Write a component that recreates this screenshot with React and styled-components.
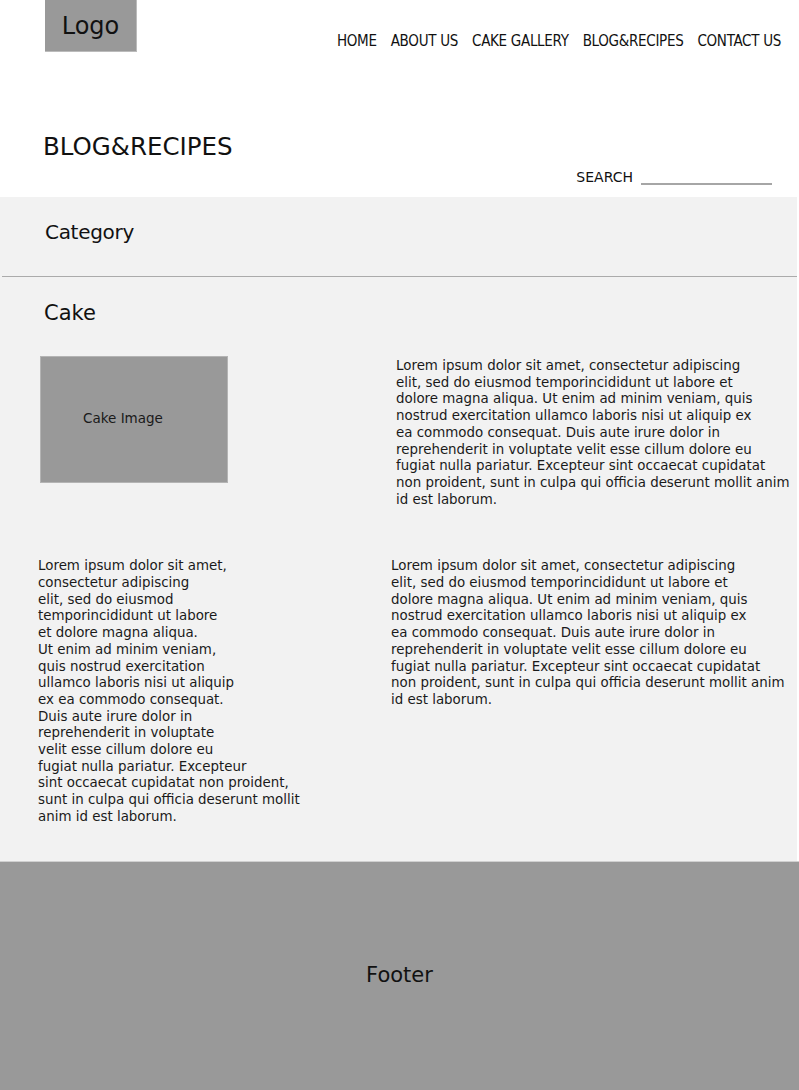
import React from "react";
import styled, { createGlobalStyle } from "styled-components";

const Global = createGlobalStyle`
  html, body { margin: 0; padding: 0; background: #fff; }
  body { font-family: "DejaVu Sans", Verdana, sans-serif; color: #111; }
  * { box-sizing: border-box; }
`;

const Page = styled.div`
  width: 799px;
  display: flex;
  flex-direction: column;
`;

const Header = styled.header`
  display: flex;
  justify-content: space-between;
  align-items: flex-start;
  padding: 0 18px 0 45px;
  height: 110px;
`;

const Logo = styled.div`
  width: 92px;
  height: 52px;
  background: #999;
  border-right: 1px solid #bbb;
  border-bottom: 1px solid #bbb;
  display: flex;
  align-items: center;
  justify-content: center;
  font-size: 24px;
`;

const Nav = styled.nav`
  display: flex;
  gap: 14px;
  margin-top: 32px;
  font-family: "DejaVu Sans Condensed", "DejaVu Sans", sans-serif;
  font-size: 15px;
  letter-spacing: -0.3px;
`;

const NavItem = styled.span`
  white-space: nowrap;
`;

const TitleRow = styled.div`
  display: flex;
  justify-content: space-between;
  align-items: flex-end;
  padding: 0 27px 12px 43px;
  height: 87px;
`;

const PageTitle = styled.h1`
  margin: 0;
  font-weight: normal;
  font-size: 24.5px;
  align-self: flex-start;
  margin-top: 22px;
`;

const Search = styled.div`
  display: flex;
  align-items: flex-end;
  gap: 8px;
  font-size: 14px;
`;

const SearchLine = styled.div`
  width: 131px;
  height: 2px;
  background: #a6a6a6;
`;

const Content = styled.main`
  width: 797px;
  background: #f2f2f2;
  height: 664px;
  display: flex;
  flex-direction: column;
`;

const Category = styled.h2`
  margin: 0;
  font-weight: normal;
  font-size: 20px;
  letter-spacing: -0.3px;
  padding: 23px 0 0 45px;
  height: 79px;
`;

const Divider = styled.hr`
  margin: 0 0 0 2px;
  border: none;
  height: 1px;
  background: #ababab;
`;

const SubHeading = styled.h3`
  margin: 0;
  font-weight: normal;
  font-size: 21px;
  padding: 24px 0 0 44px;
  height: 79px;
`;

const Row = styled.div`
  display: grid;
  grid-template-columns: ${(p) => p.$left}px 1fr;
  align-items: start;
  padding-left: ${(p) => p.$pad}px;
  margin-top: ${(p) => p.$top || 0}px;
`;

const ImageBox = styled.div`
  width: 188px;
  height: 127px;
  background: #999;
  border: 1px solid #b4b4b4;
  display: flex;
  align-items: center;
  padding-left: 42px;
  padding-bottom: 3px;
  font-size: 13.5px;
  color: #1a1a1a;
`;

const Para = styled.p`
  margin: 0;
  margin-top: ${(p) => p.$offset || 0}px;
  font-size: 13.4px;
  line-height: 16.7px;
  white-space: pre-line;
  color: #1a1a1a;
`;

const Footer = styled.footer`
  height: 229px;
  background: #999;
  border-top: 1px solid #d0d0d0;
  display: flex;
  align-items: center;
  justify-content: center;
  font-size: 21px;
  padding-bottom: 3px;
`;

const lorem = `Lorem ipsum dolor sit amet, consectetur adipiscing
elit, sed do eiusmod temporincididunt ut labore et
dolore magna aliqua. Ut enim ad minim veniam, quis
nostrud exercitation ullamco laboris nisi ut aliquip ex
ea commodo consequat. Duis aute irure dolor in
reprehenderit in voluptate velit esse cillum dolore eu
fugiat nulla pariatur. Excepteur sint occaecat cupidatat
non proident, sunt in culpa qui officia deserunt mollit anim
id est laborum.`;

const loremNarrow = `Lorem ipsum dolor sit amet,
consectetur adipiscing
elit, sed do eiusmod
temporincididunt ut labore
et dolore magna aliqua.
Ut enim ad minim veniam,
quis nostrud exercitation
ullamco laboris nisi ut aliquip
ex ea commodo consequat.
Duis aute irure dolor in
reprehenderit in voluptate
velit esse cillum dolore eu
fugiat nulla pariatur. Excepteur
sint occaecat cupidatat non proident,
sunt in culpa qui officia deserunt mollit
anim id est laborum.`;

const navItems = ["HOME", "ABOUT US", "CAKE GALLERY", "BLOG&RECIPES", "CONTACT US"];

export default function App() {
  return (
    <Page>
      <Global />
      <Header>
        <Logo>Logo</Logo>
        <Nav>
          {navItems.map((n) => (
            <NavItem key={n}>{n}</NavItem>
          ))}
        </Nav>
      </Header>
      <TitleRow>
        <PageTitle>BLOG&amp;RECIPES</PageTitle>
        <Search>
          <span>SEARCH</span>
          <SearchLine />
        </Search>
      </TitleRow>
      <Content>
        <Category>Category</Category>
        <Divider />
        <SubHeading>Cake</SubHeading>
        <Row $left={356} $pad={40}>
          <ImageBox>Cake Image</ImageBox>
          <Para $offset={2}>{lorem}</Para>
        </Row>
        <Row $left={353} $pad={38} $top={50}>
          <Para>{loremNarrow}</Para>
          <Para>{lorem}</Para>
        </Row>
      </Content>
      <Footer>Footer</Footer>
    </Page>
  );
}
